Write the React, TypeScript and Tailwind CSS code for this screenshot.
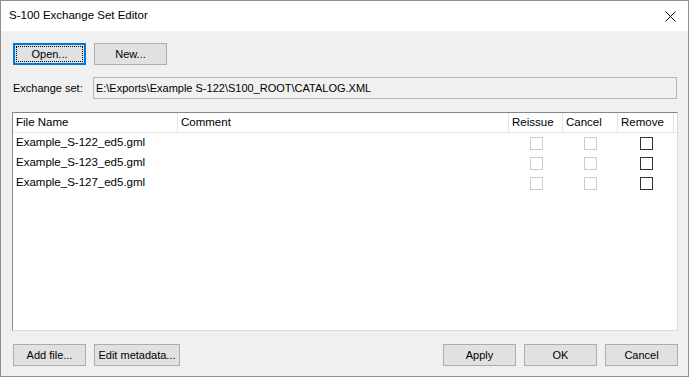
import React from 'react';

const files = ['Example_S-122_ed5.gml', 'Example_S-123_ed5.gml', 'Example_S-127_ed5.gml'];

function Btn({ label, w = 'w-[73px]', focused = false }: { label: string; w?: string; focused?: boolean }) {
  return (
    <button
      className={
        focused
          ? `${w} h-[22px] bg-[#e1e1e1] border-2 border-[#0078d7] flex items-center justify-center p-[1px]`
          : `${w} h-[22px] bg-[#e1e1e1] border border-[#adadad] flex items-center justify-center`
      }
    >
      {focused ? (
        <span className="w-full h-full border border-dotted border-black flex items-center justify-center">{label}</span>
      ) : (
        label
      )}
    </button>
  );
}

function Check({ disabled }: { disabled?: boolean }) {
  return (
    <div className="flex items-center justify-center">
      <div className={disabled ? 'w-[13px] h-[13px] border border-[#cccccc] bg-white' : 'w-[13px] h-[13px] border border-[#333333] bg-white'} />
    </div>
  );
}

export default function App() {
  return (
    <div
      className="w-[689px] h-[377px] border border-[#8e8e8e] flex flex-col bg-[#f0f0f0] text-black text-[11px]"
      style={{ fontFamily: '"Liberation Sans", Arial, sans-serif' }}
    >
      {/* title bar */}
      <div className="h-[30px] bg-white flex items-center justify-between pl-[8px] pr-[12px]">
        <span className="text-[11.5px]">S-100 Exchange Set Editor</span>
        <svg width="11" height="11" viewBox="0 0 11 11" className="mr-[0px]">
          <path d="M0.5 0.5 L10.5 10.5 M10.5 0.5 L0.5 10.5" stroke="#000" strokeWidth="1" />
        </svg>
      </div>

      <div className="flex-1 flex flex-col px-[11px]">
        <div className="flex gap-[8px] mt-[12px] ml-[1px]">
          <Btn label="Open..." focused />
          <Btn label="New..." />
        </div>

        <div className="flex items-center mt-[12px] ml-[1px]">
          <span className="w-[80px]">Exchange set:</span>
          <div className="w-[585px] h-[22px] border border-[#b4b4b4] bg-[#f0f0f0] flex items-center pl-[2px]">
            E:\Exports\Example S-122\S100_ROOT\CATALOG.XML
          </div>
        </div>

        <div className="mt-[13px] w-[666px] h-[219px] bg-white border-t border-l border-[#828790] border-r border-b border-r-[#dcdcdc] border-b-[#dcdcdc] flex flex-col text-[11.5px]">
          <div className="grid grid-cols-[165px_331px_54px_55px_56px_1fr] h-[20px] border-b border-[#e5e5e5]">
            <div className="border-r border-[#e5e5e5] pl-[3px] flex items-center">File Name</div>
            <div className="border-r border-[#e5e5e5] pl-[3px] flex items-center">Comment</div>
            <div className="border-r border-[#e5e5e5] pl-[3px] flex items-center">Reissue</div>
            <div className="border-r border-[#e5e5e5] pl-[3px] flex items-center">Cancel</div>
            <div className="border-r border-[#e5e5e5] pl-[3px] flex items-center">Remove</div>
            <div />
          </div>
          {files.map((f) => (
            <div key={f} className="grid grid-cols-[165px_331px_54px_55px_56px_1fr] h-[20px] items-center">
              <div className="pl-[3px]">{f}</div>
              <div />
              <Check disabled />
              <Check disabled />
              <Check />
              <div />
            </div>
          ))}
        </div>

        <div className="flex mt-[13px] ml-[1px]">
          <div className="flex gap-[8px]">
            <Btn label="Add file..." />
            <Btn label="Edit metadata..." w="w-[86px]" />
          </div>
          <div className="flex gap-[8px] ml-auto mr-[-1px]">
            <Btn label="Apply" />
            <Btn label="OK" />
            <Btn label="Cancel" />
          </div>
        </div>
      </div>
    </div>
  );
}
